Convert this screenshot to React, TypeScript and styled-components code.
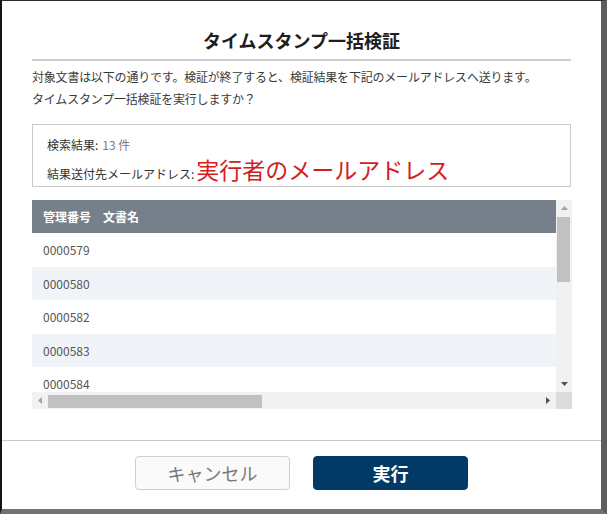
import React from "react";
import styled, { createGlobalStyle } from "styled-components";

const Global = createGlobalStyle`
  html, body { margin: 0; padding: 0; background: #ffffff; }
  * { box-sizing: border-box; }
  body { font-family: "Noto Sans CJK JP", "Noto Sans", "Liberation Sans", sans-serif; }
`;

const Frame = styled.div`
  width: 607px;
  height: 514px;
  border-left: 2px solid #141414;
  border-top: 1px solid #2a2a2a;
  border-right: 6px solid #5c5c5c;
  border-bottom: 5px solid #727272;
  background: #ffffff;
  display: flex;
  flex-direction: column;
`;

const Body = styled.div`
  padding: 25px 30px 31px;
  display: flex;
  flex-direction: column;
`;

const Title = styled.h1`
  margin: 0;
  height: 28px;
  line-height: 28px;
  font-size: 18px;
  font-weight: 700;
  color: #1e1e1e;
  text-align: center;
`;

const Divider = styled.div`
  margin-top: 5px;
  height: 2px;
  background: #cbced2;
`;

const Description = styled.p`
  margin: 5px 0 0;
  font-size: 12px;
  line-height: 22px;
  letter-spacing: -0.2px;
  color: #3a3a3a;
`;

const InfoBox = styled.div`
  margin-top: 14px;
  border: 1px solid #c9c9c9;
  padding: 9px 14px 4px;
  display: flex;
  flex-direction: column;
`;

const InfoRow = styled.div<{ $h: number }>`
  display: flex;
  align-items: baseline;
  height: ${(p) => p.$h}px;
  line-height: ${(p) => p.$h}px;
  font-size: 12px;
  color: #333;
`;

const Muted = styled.span`
  color: #7a7a7a;
  margin-left: 4px;
`;

const Highlight = styled.span`
  font-size: 23px;
  color: #d31d1d;
  margin-left: 2px;
`;

const ScrollFrame = styled.div`
  margin-top: 13px;
  display: grid;
  grid-template-columns: 524px 16px;
  grid-template-rows: 192px 17px;
`;

const Viewport = styled.div`
  overflow: hidden;
`;

const Table = styled.table`
  width: 1205px;
  border-collapse: collapse;
  font-size: 12px;
`;

const HeadCell = styled.th<{ $w?: number }>`
  background: #76808a;
  color: #ffffff;
  font-weight: 700;
  text-align: left;
  height: 33px;
  padding: 0 0 0 11px;
  white-space: nowrap;
  ${(p) => (p.$w ? `width: ${p.$w}px;` : "")}
`;

const Row = styled.tr<{ $alt: boolean }>`
  background: ${(p) => (p.$alt ? "#f0f4f8" : "#ffffff")};
`;

const Cell = styled.td`
  height: 33.5px;
  padding: 0 0 0 11px;
  color: #555;
  white-space: nowrap;
`;

const VBar = styled.div`
  background: #f1f1f1;
  display: flex;
  flex-direction: column;
`;

const HBar = styled.div`
  background: #f1f1f1;
  display: flex;
  align-items: center;
`;

const Corner = styled.div`
  background: #dcdcdc;
`;

const ArrowBtn = styled.div`
  width: 16px;
  height: 16px;
  flex: 0 0 16px;
  display: flex;
  align-items: center;
  justify-content: center;
`;

const VTrack = styled.div`
  flex: 1;
  padding: 1px 2px 0 1px;
`;

const VThumb = styled.div`
  height: 65px;
  background: #c1c1c1;
`;

const HTrack = styled.div`
  flex: 1;
  height: 100%;
  padding: 3px 0 1px;
`;

const HThumb = styled.div`
  width: 214px;
  height: 100%;
  background: #c1c1c1;
`;

const Footer = styled.div`
  border-top: 1px solid #c8c8c8;
  padding-top: 15px;
  display: flex;
  justify-content: center;
  gap: 23px;
`;

const Button = styled.button<{ $primary?: boolean }>`
  width: 155px;
  height: 34px;
  border-radius: 4px;
  font-family: inherit;
  font-size: 18px;
  line-height: 1;
  cursor: pointer;
  border: 1px solid ${(p) => (p.$primary ? "#013a67" : "#cfcfcf")};
  background: ${(p) => (p.$primary ? "#013a67" : "#fafafa")};
  color: ${(p) => (p.$primary ? "#ffffff" : "#7a7a7a")};
  font-weight: ${(p) => (p.$primary ? 700 : 400)};
`;

const Tri = ({ dir, color }: { dir: "up" | "down" | "left" | "right"; color: string }) => {
  const pts: Record<string, string> = {
    up: "0,4 3.5,0 7,4",
    down: "0,0 7,0 3.5,4",
    left: "4,0 4,7 0,3.5",
    right: "0,0 0,7 4,3.5",
  };
  const vertical = dir === "up" || dir === "down";
  return (
    <svg width={vertical ? 7 : 4} height={vertical ? 4 : 7} viewBox={vertical ? "0 0 7 4" : "0 0 4 7"}>
      <polygon points={pts[dir]} fill={color} />
    </svg>
  );
};

const ids = ["0000579", "0000580", "0000582", "0000583", "0000584"];

export default function App() {
  return (
    <>
      <Global />
      <Frame>
        <Body>
          <Title>タイムスタンプ一括検証</Title>
          <Divider />
          <Description>
            対象文書は以下の通りです。検証が終了すると、検証結果を下記のメールアドレスへ送ります。
            <br />
            タイムスタンプ一括検証を実行しますか？
          </Description>
          <InfoBox>
            <InfoRow $h={22}>
              検索結果:<Muted>13 件</Muted>
            </InfoRow>
            <InfoRow $h={26}>
              結果送付先メールアドレス:<Highlight>実行者のメールアドレス</Highlight>
            </InfoRow>
          </InfoBox>
          <ScrollFrame>
            <Viewport>
              <Table>
                <thead>
                  <tr>
                    <HeadCell $w={60}>管理番号</HeadCell>
                    <HeadCell>文書名</HeadCell>
                  </tr>
                </thead>
                <tbody>
                  {ids.map((id, i) => (
                    <Row key={id} $alt={i % 2 === 1}>
                      <Cell>{id}</Cell>
                      <Cell />
                    </Row>
                  ))}
                </tbody>
              </Table>
            </Viewport>
            <VBar>
              <ArrowBtn>
                <Tri dir="up" color="#a3a3a3" />
              </ArrowBtn>
              <VTrack>
                <VThumb />
              </VTrack>
              <ArrowBtn>
                <Tri dir="down" color="#505050" />
              </ArrowBtn>
            </VBar>
            <HBar>
              <ArrowBtn>
                <Tri dir="left" color="#a3a3a3" />
              </ArrowBtn>
              <HTrack>
                <HThumb />
              </HTrack>
              <ArrowBtn>
                <Tri dir="right" color="#505050" />
              </ArrowBtn>
            </HBar>
            <Corner />
          </ScrollFrame>
        </Body>
        <Footer>
          <Button>キャンセル</Button>
          <Button $primary>実行</Button>
        </Footer>
      </Frame>
    </>
  );
}
